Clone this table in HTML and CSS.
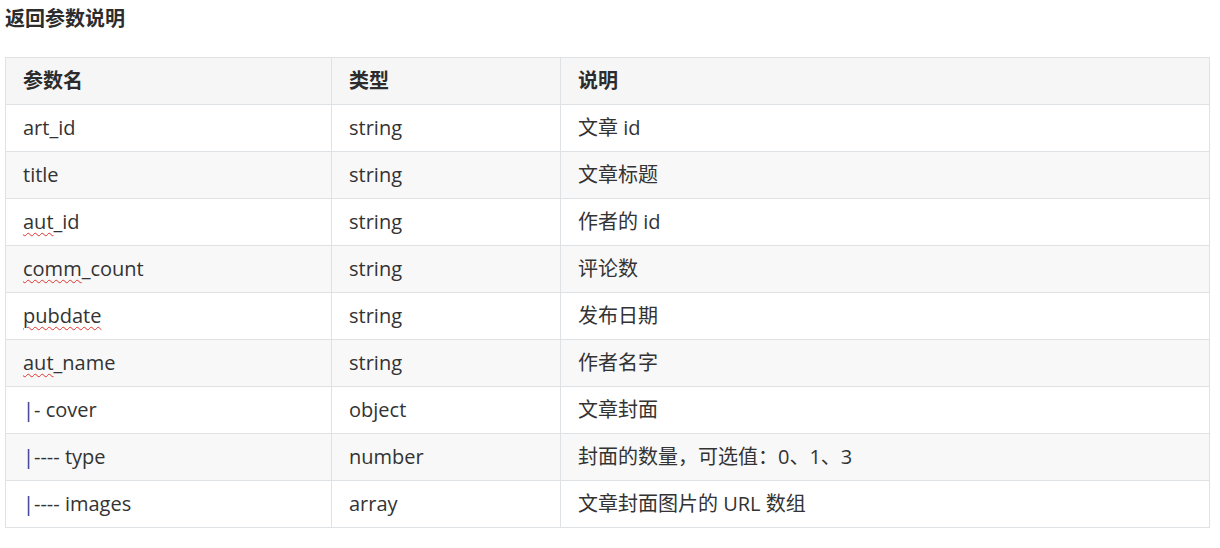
FILE: index.html
```html
<!DOCTYPE html>
<html lang="zh-CN">
<head>
<meta charset="utf-8">
<title>返回参数说明</title>
<link rel="stylesheet" href="styles.css">
</head>
<body>
<div class="doc">
  <h3 class="title">返回参数说明</h3>
  <table class="params">
    <colgroup>
      <col class="c1"><col class="c2"><col class="c3">
    </colgroup>
    <thead>
      <tr><th>参数名</th><th>类型</th><th>说明</th></tr>
    </thead>
    <tbody>
      <tr><td>art_id</td><td>string</td><td>文章 id</td></tr>
      <tr><td>title</td><td>string</td><td>文章标题</td></tr>
      <tr><td><span class="sp">aut</span>_id</td><td>string</td><td>作者的 id</td></tr>
      <tr><td><span class="sp">comm</span>_count</td><td>string</td><td>评论数</td></tr>
      <tr><td><span class="sp">pubdate</span></td><td>string</td><td>发布日期</td></tr>
      <tr><td><span class="sp">aut</span>_name</td><td>string</td><td>作者名字</td></tr>
      <tr><td><span class="pipe">|</span>- cover</td><td>object</td><td>文章封面</td></tr>
      <tr><td><span class="pipe">|</span>---- type</td><td>number</td><td>封面的数量，可选值：0、1、3</td></tr>
      <tr><td><span class="pipe">|</span>---- images</td><td>array</td><td>文章封面图片的 URL 数组</td></tr>
    </tbody>
  </table>
</div>
</body>
</html>
```

FILE: styles.css
```css
html, body {
  margin: 0;
  padding: 0;
  background: #ffffff;
}

body {
  font-family: "Open Sans", "Noto Sans CJK SC", sans-serif;
  color: #333333;
}

.doc {
  padding: 6px 11px 0 5px;
}

.title {
  margin: 0 0 25px 0;
  font-size: 20px;
  line-height: 26px;
  font-weight: 700;
  color: #2c2c2c;
}

.params {
  width: 1205px;
  border-collapse: collapse;
  table-layout: fixed;
  font-size: 20px;
}

.c1 { width: 326px; }
.c2 { width: 229px; }
.c3 { width: auto; }

.params th,
.params td {
  border: 1px solid #dfe2e5;
  height: 47px;
  padding: 0 17px;
  text-align: left;
  vertical-align: middle;
  line-height: 26px;
  box-sizing: border-box;
}

.params th {
  background: #f6f6f6;
  font-weight: 700;
  color: #2c2c2c;
}

.params td {
  font-weight: 400;
  color: #333333;
}

.params tbody tr:nth-child(even) td {
  background: #f8f8f8;
}

.sp {
  text-decoration: underline wavy #e0342f;
  text-decoration-thickness: 1px;
  text-underline-offset: 3px;
}

.pipe {
  color: #2a3f8f;
}
```
